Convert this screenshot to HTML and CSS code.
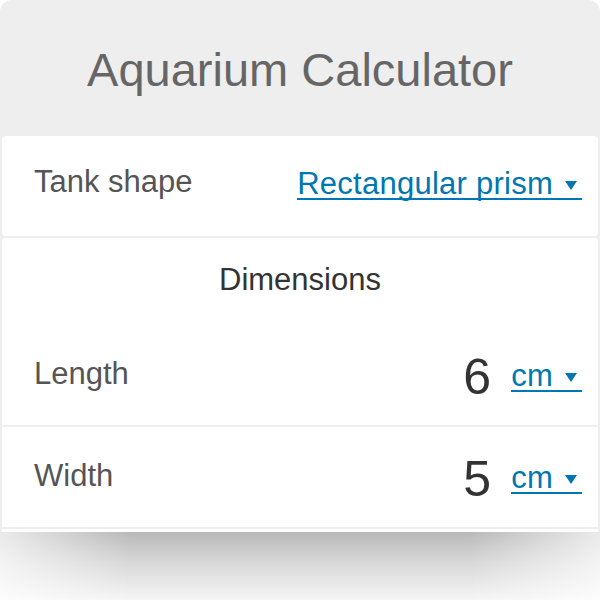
FILE: index.html
```html
<!DOCTYPE html>
<html lang="en">
<head>
  <meta charset="UTF-8" />
  <meta name="viewport" content="width=device-width, initial-scale=1.0">
  <title>Aquarium Calculator</title>
  <link rel="stylesheet" href="styles.css">
</head>
<body>
  <div class="calc">
    <h1 class="calc-title">Aquarium Calculator</h1>

    <div class="block">
      <div class="row row-first">
        <span class="label">Tank shape</span>
        <div class="field">
          <a href="#" class="select">Rectangular prism<svg class="caret" width="12" height="9" viewBox="0 0 12 9"><polygon points="0,0 12,0 6,9" /></svg></a>
        </div>
      </div>
    </div>

    <div class="block">
      <div class="section-title">Dimensions</div>

      <div class="row row-length">
        <span class="label">Length</span>
        <div class="field">
          <span class="value">6</span>
          <a href="#" class="select">cm<svg class="caret" width="12" height="9" viewBox="0 0 12 9"><polygon points="0,0 12,0 6,9" /></svg></a>
        </div>
      </div>

      <div class="row row-line">
        <span class="label">Width</span>
        <div class="field">
          <span class="value">5</span>
          <a href="#" class="select">cm<svg class="caret" width="12" height="9" viewBox="0 0 12 9"><polygon points="0,0 12,0 6,9" /></svg></a>
        </div>
      </div>

      <!-- debut de la ligne suivante, coupee par le bas de la carte -->
      <div class="row row-line"></div>
    </div>
  </div>
  <div class="calc-shadow"></div>
</body>
</html>
```

FILE: styles.css
```css
body {
  margin: 0;
  background-color: #fff;
  font-family: "Liberation Sans", Arial, sans-serif;
}

.calc {
  height: 532px;
  overflow: hidden;
  background: #eeeeee;
  border-radius: 12px 12px 0 0;
}

/* ombre portee sous la carte */
.calc-shadow {
  height: 68px;
  background: linear-gradient(rgba(0, 0, 0, 0.28), rgba(0, 0, 0, 0.16) 28px, rgba(0, 0, 0, 0.04));
  -webkit-mask-image: linear-gradient(to right, rgba(0, 0, 0, 0.3), #000 130px, #000 470px, rgba(0, 0, 0, 0.3));
  mask-image: linear-gradient(to right, rgba(0, 0, 0, 0.3), #000 130px, #000 470px, rgba(0, 0, 0, 0.3));
}

.calc-title {
  margin: 0;
  height: 136px;
  box-sizing: border-box;
  padding-top: 2px;
  display: flex;
  align-items: center;
  justify-content: center;
  font-size: 47px;
  font-weight: normal;
  color: #666;
}

.block {
  background: white;
  margin: 0 2px;
  border-radius: 4px;
}

.block + .block {
  margin-top: 2px;
}

.row {
  display: flex;
  align-items: center;
  justify-content: space-between;
  height: 100px;
  box-sizing: border-box;
  padding: 0 16px 2px 32px;
}

.row-first {
  padding-bottom: 8px;
}

.row-length {
  height: 103px;
  padding-bottom: 0;
}

.row-line {
  height: 102px;
  border-top: 2px solid #eeeeee;
}

.label {
  font-size: 31px;
  color: #555;
}

.section-title {
  height: 84px;
  display: flex;
  align-items: center;
  justify-content: center;
  font-size: 31px;
  color: #333;
}

.field {
  display: flex;
  align-items: center;
  margin-top: 6px;
}

.value {
  font-size: 50px;
  line-height: 1;
  color: #333;
}

.select {
  display: inline-block;
  margin-left: 20px;
  font-size: 31px;
  line-height: 28px;
  letter-spacing: 0.25px;
  color: #0077b0;
  text-decoration: none;
  border-bottom: 2px solid #0077b0;
}

.caret {
  vertical-align: middle;
  margin: 0 5px 0 12px;
  fill: #0077b0;
}
```
